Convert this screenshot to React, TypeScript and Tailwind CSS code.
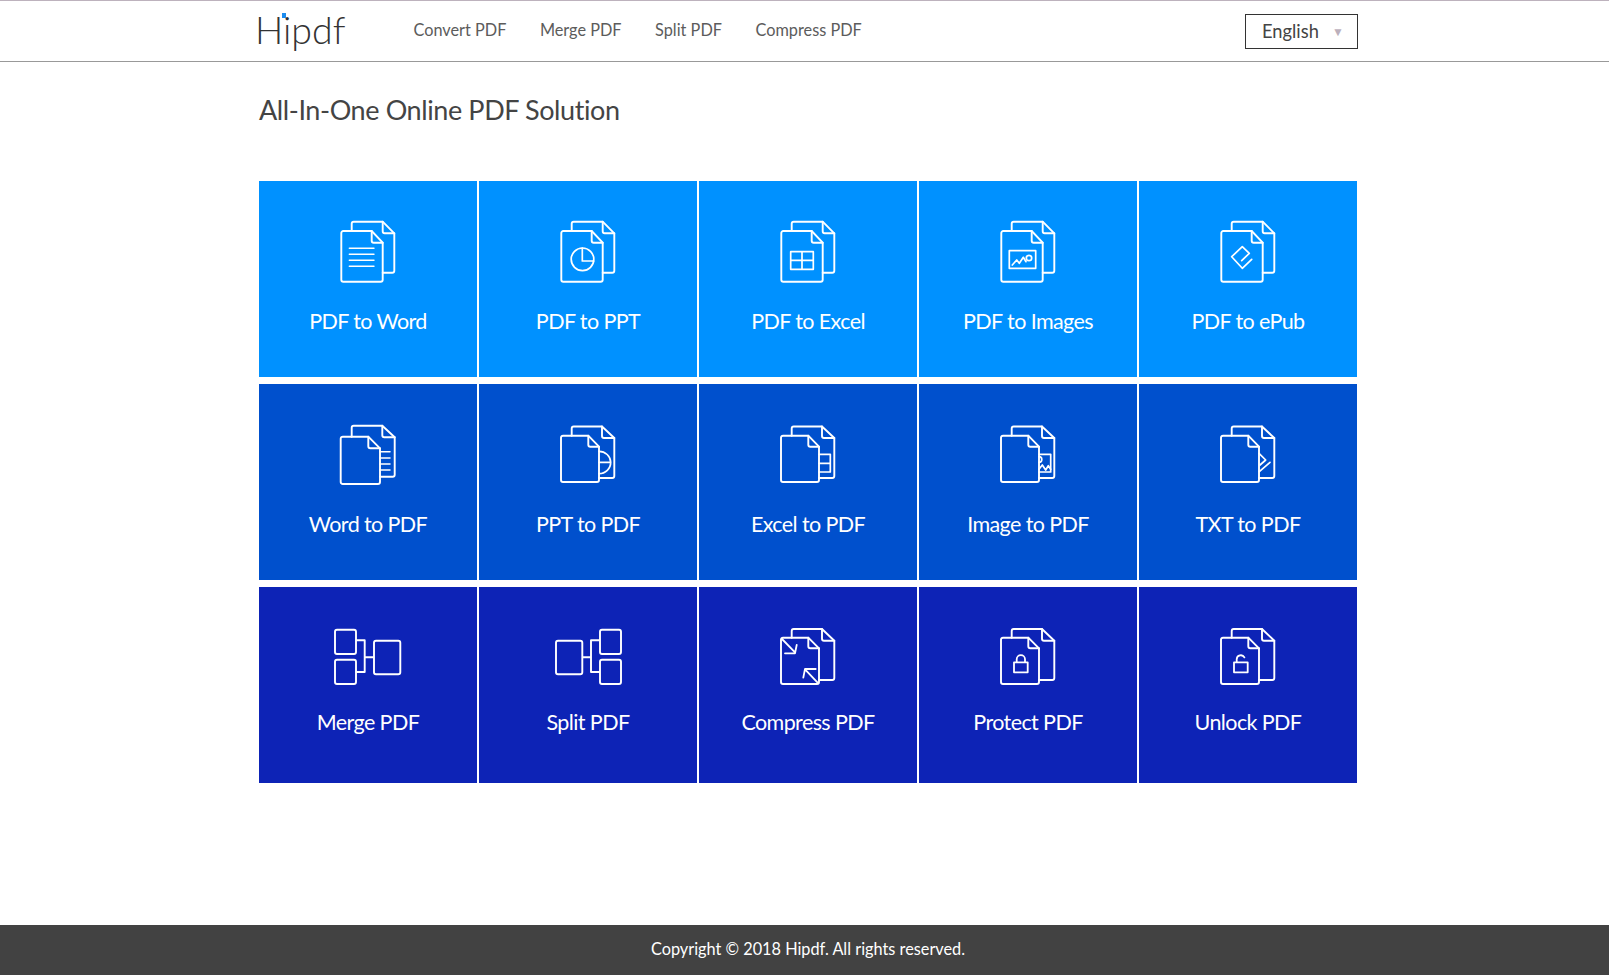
import type { ReactNode } from 'react';

const FONT = "font-['Lato','Open_Sans',sans-serif]";

// rounded doc outline with a cut top right corner, coords are px inside the icon box
const docPath = (l: number, t: number, r: number, b: number, fx: number, fy: number) =>
  `M${l + 2} ${t}H${fx}L${r} ${fy}V${b - 2}a2 2 0 0 1-2 2H${l + 2}a2 2 0 0 1-2-2V${t + 2}a2 2 0 0 1 2-2Z`;

const foldPath = (fx: number, t: number, r: number, fy: number) =>
  `M${fx} ${t}V${fy - 2}a2 2 0 0 0 2 2H${r}`;

type Shape = { front: number[]; back: number[] };

const TOP: Shape = { front: [2.3, 12, 43.7, 62.7, 32.7, 23.7], back: [12.7, 2.7, 55.3, 53.7, 43.7, 14.3] };
const MID: Shape = { front: [2, 13.7, 40, 60, 29.3, 24.7], back: [12.7, 4.5, 55.3, 56, 43, 16] };
const BOT: Shape = { front: [2, 12.7, 40, 59, 29.3, 23.3], back: [12.7, 4, 55.3, 55, 43, 15.7] };

const Docs = ({ shape, h, children }: { shape: Shape; h: number; children?: ReactNode }) => {
  const [l, t, r, b, fx, fy] = shape.front;
  const [bl, bt, br, bb, bfx, bfy] = shape.back;
  return (
    <svg width="58" height={h} viewBox={`0 0 58 ${h}`} fill="none" stroke="white" strokeWidth="1.9" strokeLinejoin="round" strokeLinecap="round">
      <path d={`M${bl} ${t}V${bt + 2}a2 2 0 0 1 2-2H${bfx}L${br} ${bfy}V${bb - 2}a2 2 0 0 1-2 2H${r}`} />
      <path d={foldPath(bfx, bt, br, bfy)} />
      <path d={docPath(l, t, r, b, fx, fy)} />
      <path d={foldPath(fx, t, r, fy)} />
      {children}
    </svg>
  );
};

const MergeIcon = () => (
  <svg width="70" height="62" viewBox="0 0 70 62" fill="none" stroke="white" strokeWidth="1.9" strokeLinejoin="round">
    <rect x="2" y="4.7" width="21" height="24.3" rx="2" />
    <rect x="2" y="34.7" width="21" height="24.3" rx="2" />
    <rect x="41" y="15.7" width="26.3" height="33.6" rx="2" />
    <path d="M23 15.3H31.7V47H23M31.7 32.3H41" />
  </svg>
);

const SplitIcon = () => (
  <svg width="70" height="62" viewBox="0 0 70 62" fill="none" stroke="white" strokeWidth="1.9" strokeLinejoin="round">
    <rect x="3" y="15.7" width="26.3" height="33.6" rx="2" />
    <rect x="47" y="4.7" width="21" height="24.3" rx="2" />
    <rect x="47" y="34.7" width="21" height="24.3" rx="2" />
    <path d="M29.3 32.3H38M47 15.3H38V47H47" />
  </svg>
);

type Tool = { label: string; icon: ReactNode };

const row1: Tool[] = [
  {
    label: 'PDF to Word',
    icon: (
      <Docs shape={TOP} h={66}>
        <path strokeWidth="1.4" d="M10.3 29.3H35M10.3 35.3H35M10.3 41.3H35M10.3 47.3H35" />
      </Docs>
    ),
  },
  {
    label: 'PDF to PPT',
    icon: (
      <Docs shape={TOP} h={66}>
        <circle cx="23.5" cy="40.3" r="11.3" strokeWidth="1.7" />
        <path strokeWidth="1.7" d="M23.3 29V42H34.6" />
      </Docs>
    ),
  },
  {
    label: 'PDF to Excel',
    icon: (
      <Docs shape={TOP} h={66}>
        <path strokeWidth="1.7" d="M11.7 32.7H34.3V50.3H11.7ZM23 32.7V50.3M11.7 41.3H34.3" />
      </Docs>
    ),
  },
  {
    label: 'PDF to Images',
    icon: (
      <Docs shape={TOP} h={66}>
        <path strokeWidth="1.7" d="M10.3 31.7H36.7V49.3H10.3Z" />
        <path strokeWidth="1.7" d="M13.3 46L17.7 41L20.3 44.3L24.3 38.3L27 42.7" />
        <circle cx="30" cy="39" r="2.7" strokeWidth="1.7" />
      </Docs>
    ),
  },
  {
    label: 'PDF to ePub',
    icon: (
      <Docs shape={TOP} h={66}>
        <path strokeWidth="1.7" d="M32.7 40.3L23.3 49.3L12.7 37.7L23.3 27.7L30.3 34.3L22.7 41.7" />
      </Docs>
    ),
  },
];

const row2: Tool[] = [
  {
    label: 'Word to PDF',
    icon: (
      <Docs shape={{ front: [1.7, 14.7, 41, 62, 29.3, 26.3], back: [12.7, 3.7, 55.7, 54.7, 43.3, 15.3] }} h={66}>
        <path strokeWidth="1.5" d="M41 29.7H51M41 36H51M41 42H51M41 48H51" />
      </Docs>
    ),
  },
  {
    label: 'PPT to PDF',
    icon: (
      <Docs shape={MID} h={66}>
        <path strokeWidth="1.7" d="M40 29.3A11.7 11.3 0 0 1 51.7 40.3A11.7 11.3 0 0 1 40 51.7M40 40.3H51.7" />
      </Docs>
    ),
  },
  {
    label: 'Excel to PDF',
    icon: (
      <Docs shape={MID} h={66}>
        <path strokeWidth="1.7" d="M40 32.3H51.3V50H40M40 41.3H51.3" />
      </Docs>
    ),
  },
  {
    label: 'Image to PDF',
    icon: (
      <Docs shape={MID} h={66}>
        <path strokeWidth="1.7" d="M40 32.3H51.7V50H40" />
        <path strokeWidth="1.7" d="M40 47.3L43.3 43L46.7 48L49.3 43.7L51.7 47.3" />
        <path strokeWidth="1.7" d="M40 34.7A2.8 2.8 0 0 1 40 40.3" />
      </Docs>
    ),
  },
  {
    label: 'TXT to PDF',
    icon: (
      <Docs shape={MID} h={66}>
        <path strokeWidth="1.7" d="M40 31.3L46.7 38L41 43M51 40.3L40.3 49.7" />
      </Docs>
    ),
  },
];

const row3: Tool[] = [
  { label: 'Merge PDF', icon: <MergeIcon /> },
  { label: 'Split PDF', icon: <SplitIcon /> },
  {
    label: 'Compress PDF',
    icon: (
      <Docs shape={BOT} h={62}>
        <path strokeWidth="1.8" d="M3 14L16 27.3M17.7 20L16 28.3H6M39.3 58.3L26 44.3M36.7 44H26L24.3 52.7" />
      </Docs>
    ),
  },
  {
    label: 'Protect PDF',
    icon: (
      <Docs shape={BOT} h={62}>
        <path strokeWidth="1.8" d="M15 37.3H28.7V47.3H15ZM17.7 37.3V34.2A4.1 4.1 0 0 1 26 34.2V37.3" />
      </Docs>
    ),
  },
  {
    label: 'Unlock PDF',
    icon: (
      <Docs shape={BOT} h={62}>
        <path strokeWidth="1.8" d="M15 37.3H28.7V47.3H15ZM17.7 37.3V34.2A4.1 4.1 0 0 1 25.4 32.4" />
      </Docs>
    ),
  },
];

const Row = ({ tools, bg, gap }: { tools: Tool[]; bg: string; gap: string }) => (
  <div className="grid grid-cols-5 gap-x-[2px]">
    {tools.map(t => (
      <a key={t.label} className={`${bg} ${gap} h-[196px] pt-[38px] flex flex-col items-center text-white`}>
        {t.icon}
        <span className="text-[21.5px] leading-[28px] tracking-[-0.6px]">{t.label}</span>
      </a>
    ))}
  </div>
);

export default function App() {
  return (
    <div className={`${FONT} min-h-[975px] flex flex-col bg-white`}>
      <header className="h-[62px] border-t border-b border-t-[#bdb2bd] border-b-[#999999] flex items-center">
        <div className="ml-[255px] w-[1103px] flex items-center">
          <span className="relative text-[37.5px] leading-[40px] font-light text-[#333333] -mt-[3px]">
            Hipdf
            <span className="absolute left-[27px] top-[3px] w-[4px] h-[5px] bg-[#1b8cf0]" />
          </span>
          <nav className="ml-[68px] -mt-[1px] flex gap-[33.5px] text-[16.3px] text-[#5c5c5c]">
            <a>Convert PDF</a>
            <a>Merge PDF</a>
            <a>Split PDF</a>
            <a>Compress PDF</a>
          </nav>
          <div className="ml-auto w-[113px] h-[35px] border border-[#333333] flex items-center pl-[16px] pr-[13px] pt-[1px] text-[18.3px] text-[#444444]">
            <span>English</span>
            <span className="ml-auto text-[12px] text-[#bcb0bc]">▼</span>
          </div>
        </div>
      </header>

      <main className="ml-[259px] w-[1098px]">
        <h1 className="h-[119px] pt-[28px] text-[27px] leading-[40px] font-normal tracking-[-0.4px] text-[#444444]">
          All-In-One Online PDF Solution
        </h1>
        <div className="flex flex-col gap-[7px]">
          <Row tools={row1} bg="bg-[#0091ff]" gap="gap-[22px]" />
          <Row tools={row2} bg="bg-[#0050cd]" gap="gap-[22px]" />
          <Row tools={row3} bg="bg-[#0d23b6]" gap="gap-[21px]" />
        </div>
      </main>

      <footer className="mt-auto h-[50px] bg-[#424242] flex items-center justify-center pl-[7px] pb-[2px] text-[16.3px] text-white">
        Copyright © 2018 Hipdf. All rights reserved.
      </footer>
    </div>
  );
}
